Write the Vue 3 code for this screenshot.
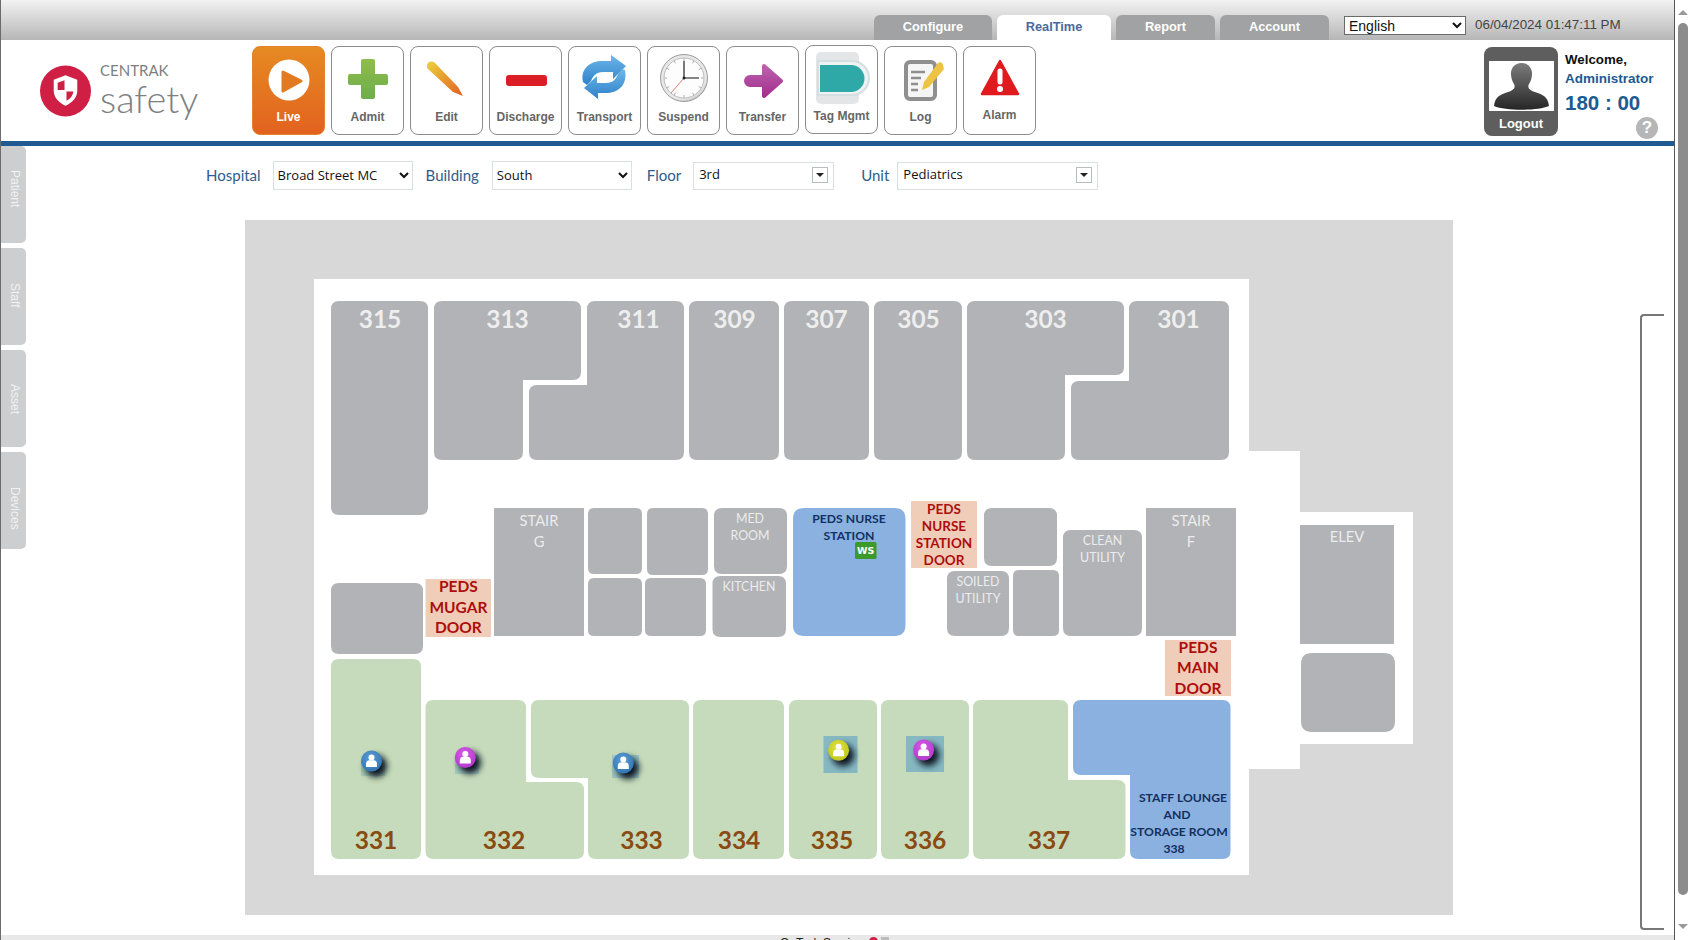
<template>
  <div class="page">
    <div class="main">
      <!-- top tabs -->
      <div class="topbar">
        <a
          v-for="tab in tabs"
          :key="tab.label"
          class="tab"
          :class="[tab.cls, { active: tab.label === 'RealTime' }]"
        >{{ tab.label }}</a>
        <select class="lang">
          <option>English</option>
        </select>
        <span class="clock-text">06/04/2024 01:47:11 PM</span>
      </div>

      <!-- toolbar -->
      <div class="toolbar">
        <div class="logo">
          <svg width="51" height="52" viewBox="0 0 52 52">
            <circle cx="26" cy="26" r="26" fill="#cf1f45" />
            <path d="M26 10 L38 14.5 V26 C38 33 32 38.5 26 41 C20 38.5 14 33 14 26 V14.5 Z" fill="#fff" />
            <path d="M25 15 V25 H18 V17.5 Z" fill="#cf1f45" />
            <path d="M27 26.5 H34 C33.6 31 30.5 34 27 36 Z" fill="#cf1f45" />
          </svg>
          <div class="logo-text">
            <span class="brand">CENTRAK</span>
            <span class="product">safety</span>
          </div>
        </div>

        <div class="tools">
          <button
            v-for="b in buttons"
            :key="b.icon"
            class="tool"
            :class="[b.icon, { live: b.icon === 'live' }]"
          >
            <svg class="tool-icon" width="71" height="60" viewBox="1 0 71 60">
              <template v-if="b.icon === 'live'">
                <circle cx="37" cy="34" r="20.5" fill="#fff" />
                <path d="M31 26 L49 35 L31 45 Z" fill="#e27a20" stroke="#e27a20" stroke-width="3" stroke-linejoin="round" />
              </template>
              <template v-else-if="b.icon === 'admit'">
                <defs>
                  <linearGradient id="gAdmit" x1="0" y1="0" x2="0" y2="1">
                    <stop offset="0" stop-color="#8fbc4c" />
                    <stop offset="1" stop-color="#6dae4a" />
                  </linearGradient>
                </defs>
                <path d="M32 13 H42 a2 2 0 0 1 2 2 V28 H55 a2 2 0 0 1 2 2 V37 a2 2 0 0 1 -2 2 H44 V51 a2 2 0 0 1 -2 2 H32 a2 2 0 0 1 -2 -2 V39 H19 a2 2 0 0 1 -2 -2 V30 a2 2 0 0 1 2 -2 H30 V15 a2 2 0 0 1 2 -2 Z" fill="url(#gAdmit)" />
              </template>
              <template v-else-if="b.icon === 'edit'">
                <defs>
                  <linearGradient id="gEdit" x1="0" y1="0" x2="1" y2="1">
                    <stop offset="0" stop-color="#ecd23c" />
                    <stop offset="1" stop-color="#e25f22" />
                  </linearGradient>
                </defs>
                <path d="M18 23 a4.5 4.5 0 0 1 7 -6 L48 41 L53 50 L43 46 Z" fill="url(#gEdit)" />
              </template>
              <template v-else-if="b.icon === 'discharge'">
                <rect x="17" y="29" width="41" height="11" rx="3" fill="#d91e26" />
              </template>
              <template v-else-if="b.icon === 'transport'">
                <defs>
                  <linearGradient id="gTrans" x1="0" y1="0" x2="0" y2="1">
                    <stop offset="0" stop-color="#6cb6ea" />
                    <stop offset="1" stop-color="#2f82c8" />
                  </linearGradient>
                </defs>
                <path d="M15 36 C12 22 23 15 34 15 H43 V9 L58 20 L45 33 V26 H35 C28 26 25 30 23 35 L19 39 Z" fill="url(#gTrans)" />
                <path d="M57 24 C60 40 49 47 38 47 H30 V53 L16 42 L29 30 V37 H38 C45 37 48 33 50 28 L54 23 Z" fill="url(#gTrans)" />
              </template>
              <template v-else-if="b.icon === 'suspend'">
                <defs>
                  <radialGradient id="gRing" cx="0.4" cy="0.35" r="0.8">
                    <stop offset="0.75" stop-color="#e8e8e8" />
                    <stop offset="1" stop-color="#8c8c8c" />
                  </radialGradient>
                </defs>
                <circle cx="37" cy="32" r="23.5" fill="url(#gRing)" stroke="#9a9a9a" />
                <circle cx="37" cy="32" r="20" fill="#fdfdfd" stroke="#bbb" />
                <line
                  v-for="t in clockTicks"
                  :key="t.k"
                  :x1="t.x1"
                  :y1="t.y1"
                  :x2="t.x2"
                  :y2="t.y2"
                  stroke="#aaa"
                  stroke-width="1"
                />
                <line x1="37" y1="32" x2="37" y2="15" stroke="#333" stroke-width="1.3" />
                <line x1="37" y1="32" x2="52" y2="32" stroke="#444" stroke-width="1.3" />
                <line x1="37" y1="32" x2="24" y2="47" stroke="#d25a5a" stroke-width=".8" />
                <circle cx="37" cy="32" r="1.5" fill="#222" />
              </template>
              <template v-else-if="b.icon === 'transfer'">
                <defs>
                  <linearGradient id="gTransfer" x1="0" y1="0" x2="0" y2="1">
                    <stop offset="0" stop-color="#bb62ac" />
                    <stop offset="1" stop-color="#a32f8f" />
                  </linearGradient>
                </defs>
                <path
                  d="M24 31 H38 V20 L55 35 L38 50 V39 H24 A4 4 0 0 1 24 31 Z"
                  fill="url(#gTransfer)"
                  stroke="url(#gTransfer)"
                  stroke-width="4"
                  stroke-linejoin="round"
                />
              </template>
              <template v-else-if="b.icon === 'tag'">
                <rect x="11" y="7" width="43" height="52" rx="5" fill="#e4e5e6" />
                <path d="M13 16 H47 A17 17 0 0 1 47 50 H13 Z" fill="#eef2f3" stroke="#d5dfe1" stroke-width="2" />
                <path d="M15 20 H46 A13.5 13.5 0 0 1 46 47 H15 Z" fill="#2fa9a8" />
              </template>
              <template v-else-if="b.icon === 'log'">
                <rect x="22" y="16" width="29" height="37" rx="4" fill="#f5f5f5" stroke="#8f8f8f" stroke-width="4" />
                <path d="M27 26 H41 M27 32 H37 M27 38 H34 M27 44 H34" stroke="#8f8f8f" stroke-width="2.4" />
                <path d="M59 19 a3 3 0 0 0 -5 -2 L40 36 L38 44 L45 41 L60 23 Z" fill="#eec242" />
              </template>
              <template v-else-if="b.icon === 'alarm'">
                <path d="M37 15 L55 48 H19 Z" fill="#e01b20" stroke="#e01b20" stroke-width="2.5" stroke-linejoin="round" />
                <path d="M37 25 V36" stroke="#fff" stroke-width="5" stroke-linecap="round" />
                <circle cx="37" cy="43" r="3" fill="#fff" />
              </template>
            </svg>
            <span class="tool-label">{{ b.label }}</span>
          </button>
        </div>

        <div class="user-card">
          <div class="avatar">
            <svg width="65" height="50" viewBox="0 0 65 50">
              <defs>
                <linearGradient id="gBust" x1="0" y1="0" x2="0" y2="1">
                  <stop offset="0" stop-color="#7c7c7c" />
                  <stop offset="1" stop-color="#262626" />
                </linearGradient>
              </defs>
              <path d="M32.5 2 C40 2 43.5 8 43 14 C42.6 19 40.5 22 39.5 24 C39 27 40 29 46 31 C54 33.5 59 36 60 45 C48 50 17 50 5 45 C6 36 11 33.5 19 31 C25 29 26 27 25.5 24 C24.5 22 22.4 19 22 14 C21.5 8 25 2 32.5 2 Z" fill="url(#gBust)" />
            </svg>
          </div>
          <span class="logout">Logout</span>
        </div>

        <div class="user-info">
          <span class="welcome">Welcome,</span>
          <span class="role">Administrator</span>
          <span class="timer">180 : 00</span>
          <span class="help">?</span>
        </div>
      </div>

      <div class="body">
        <!-- side drawers -->
        <div class="side">
          <div v-for="s in sideTabs" :key="s" class="side-tab"><span>{{ s }}</span></div>
        </div>

        <div class="center">
          <div class="filters">
            <label class="f-label hospital-label">Hospital</label>
            <select class="f-select hospital"><option>Broad Street MC</option></select>
            <label class="f-label">Building</label>
            <select class="f-select building"><option>South</option></select>
            <label class="f-label floor-label">Floor</label>
            <div class="combo floor"><span>3rd</span><i class="combo-btn"></i></div>
            <label class="f-label unit-label">Unit</label>
            <div class="combo unit"><span>Pediatrics</span><i class="combo-btn"></i></div>
          </div>

          <svg class="plan" width="1208" height="695" viewBox="245 220 1208 695">
            <defs>
              <filter id="pinBlur" x="-80%" y="-80%" width="260%" height="260%">
                <feGaussianBlur stdDeviation="3" />
              </filter>
              <radialGradient id="pinblue" cx=".45" cy=".35" r=".7">
                <stop offset="0" stop-color="#5c9fd6" />
                <stop offset="1" stop-color="#2f72ae" />
              </radialGradient>
              <radialGradient id="pinpurple" cx=".45" cy=".35" r=".7">
                <stop offset="0" stop-color="#d65ce6" />
                <stop offset="1" stop-color="#b336cc" />
              </radialGradient>
              <radialGradient id="pinyellow" cx=".45" cy=".35" r=".7">
                <stop offset="0" stop-color="#e0e23a" />
                <stop offset="1" stop-color="#bcc41c" />
              </radialGradient>
            </defs>

            <path :d="floorPath" fill="#fff" />
            <path
              v-for="(r, i) in roomPaths"
              :key="i"
              :d="r.d"
              :fill="r.fill"
            />

            <text
              v-for="(t, i) in labels"
              :key="'t' + i"
              :x="t.x"
              :y="t.y"
              :class="t.cls"
              text-anchor="middle"
              dominant-baseline="central"
            >{{ t.s }}</text>

            <rect x="855" y="542" width="21.5" height="17" rx="1.5" fill="#3c9a2c" />
            <text x="865.7" y="550.5" class="ws" text-anchor="middle" dominant-baseline="central">WS</text>

            <g v-for="(p, i) in pins" :key="'p' + i">
              <rect :x="p.bx" :y="p.by" :width="p.bw" :height="p.bh" :fill="p.bg" />
              <circle :cx="p.x + 4.5" :cy="p.y + 5" r="11" fill="#081420" filter="url(#pinBlur)" />
              <circle :cx="p.x" :cy="p.y" r="10.5" :fill="`url(#pin${p.color})`" />
              <circle :cx="p.x" :cy="p.y - 3.6" r="3" fill="#fff" />
              <path
                :d="`M${p.x - 5.5} ${p.y + 6} v-3 q0 -3.5 3.5 -3.8 h4 q3.5 .3 3.5 3.8 v3 z`"
                fill="#fff"
              />
            </g>
          </svg>
        </div>

        <div class="bracket"></div>
      </div>

      <div class="strip">
        <span>OnTrak Service</span>
        <i class="dot"></i>
        <i class="box"></i>
      </div>
    </div>

    <!-- page scrollbar -->
    <div class="scrollbar">
      <i class="arrow up"></i>
      <div class="thumb"></div>
      <i class="arrow down"></i>
    </div>
  </div>
</template>

<script setup>
const tabs = [
  { label: 'Configure', cls: 'w-configure' },
  { label: 'RealTime', cls: 'w-realtime' },
  { label: 'Report', cls: 'w-report' },
  { label: 'Account', cls: 'w-account' }
]

const buttons = [
  { icon: 'live', label: 'Live' },
  { icon: 'admit', label: 'Admit' },
  { icon: 'edit', label: 'Edit' },
  { icon: 'discharge', label: 'Discharge' },
  { icon: 'transport', label: 'Transport' },
  { icon: 'suspend', label: 'Suspend' },
  { icon: 'transfer', label: 'Transfer' },
  { icon: 'tag', label: 'Tag Mgmt' },
  { icon: 'log', label: 'Log' },
  { icon: 'alarm', label: 'Alarm' }
]

const sideTabs = ['Patient', 'Staff', 'Asset', 'Devices']

const clockTicks = Array.from({ length: 12 }, (_, k) => {
  const a = (k * Math.PI) / 6
  return {
    k,
    x1: 37 + 17 * Math.sin(a),
    y1: 32 - 17 * Math.cos(a),
    x2: 37 + 19.5 * Math.sin(a),
    y2: 32 - 19.5 * Math.cos(a)
  }
})

// polygon (clockwise) to path, only the outer corners get rounded
const roomPath = (pts, r = 8) => {
  const n = pts.length
  let d = ''
  pts.forEach((p, i) => {
    const a = pts[(i + n - 1) % n]
    const b = pts[(i + 1) % n]
    const ax = p[0] - a[0], ay = p[1] - a[1]
    const bx = b[0] - p[0], by = b[1] - p[1]
    const la = Math.hypot(ax, ay), lb = Math.hypot(bx, by)
    const convex = ax * by - ay * bx > 0
    const c = convex ? Math.min(r, la / 2, lb / 2) : 0
    const x1 = p[0] - (ax / la) * c, y1 = p[1] - (ay / la) * c
    const x2 = p[0] + (bx / lb) * c, y2 = p[1] + (by / lb) * c
    d += `${i ? 'L' : 'M'}${x1} ${y1} Q${p[0]} ${p[1]} ${x2} ${y2} `
  })
  return d + 'Z'
}

const box = (x1, y1, x2, y2) => [[x1, y1], [x2, y1], [x2, y2], [x1, y2]]

const GRAY = '#b1b3b6'
const GREEN = '#c5dbbb'
const BLUE = '#8ab1e0'
const DOOR = '#f0cdb8'

const floorPath = roomPath(
  [[314, 279], [1249, 279], [1249, 451], [1300, 451], [1300, 512], [1413, 512], [1413, 744], [1300, 744], [1300, 769], [1249, 769], [1249, 875], [314, 875]],
  0
)

const rooms = [
  // top row
  { pts: box(331, 301, 428, 515), fill: GRAY },
  { pts: [[434, 301], [581, 301], [581, 380], [523, 380], [523, 460], [434, 460]], fill: GRAY },
  { pts: [[587, 301], [684, 301], [684, 460], [529, 460], [529, 385], [587, 385]], fill: GRAY },
  { pts: box(689, 301, 779, 460), fill: GRAY },
  { pts: box(784, 301, 869, 460), fill: GRAY },
  { pts: box(874, 301, 962, 460), fill: GRAY },
  { pts: [[967, 301], [1124, 301], [1124, 375], [1065, 375], [1065, 460], [967, 460]], fill: GRAY },
  { pts: [[1129, 301], [1229, 301], [1229, 460], [1071, 460], [1071, 381], [1129, 381]], fill: GRAY },
  // middle
  { pts: box(331, 583, 423, 654), fill: GRAY },
  { pts: box(425.5, 579, 491, 637), fill: DOOR, r: 0 },
  { pts: box(494, 508, 584, 636), fill: GRAY, r: 0 },
  { pts: box(588, 508, 642, 574), fill: GRAY, r: 6 },
  { pts: box(647, 508, 708, 575), fill: GRAY, r: 6 },
  { pts: box(588, 578, 642, 636), fill: GRAY, r: 6 },
  { pts: box(645, 578, 706, 636), fill: GRAY, r: 6 },
  { pts: box(714, 508, 787, 574), fill: GRAY },
  { pts: box(712.5, 576, 786, 637), fill: GRAY },
  { pts: box(793, 508, 905.5, 636), fill: BLUE, r: 11 },
  { pts: box(911, 501, 977, 568), fill: DOOR, r: 0 },
  { pts: box(984, 508, 1057, 566), fill: GRAY },
  { pts: box(947, 571, 1009, 636), fill: GRAY },
  { pts: box(1013, 570, 1059, 636), fill: GRAY, r: 6 },
  { pts: box(1063, 530, 1142, 636), fill: GRAY },
  { pts: box(1146, 508, 1236, 636), fill: GRAY, r: 0 },
  { pts: box(1165, 640, 1231, 696), fill: DOOR, r: 0 },
  { pts: box(1300, 525, 1394, 644), fill: GRAY, r: 0 },
  { pts: box(1301, 653, 1395, 732), fill: GRAY, r: 11 },
  // bottom row
  { pts: box(331, 659, 421, 859), fill: GREEN },
  { pts: [[425.5, 700], [526, 700], [526, 782], [584, 782], [584, 859], [425.5, 859]], fill: GREEN },
  { pts: [[531, 700], [689, 700], [689, 859], [588, 859], [588, 778], [531, 778]], fill: GREEN },
  { pts: box(693, 700, 784, 859), fill: GREEN },
  { pts: box(789, 700, 877, 859), fill: GREEN },
  { pts: box(881, 700, 969, 859), fill: GREEN },
  { pts: [[973, 700], [1068, 700], [1068, 780], [1125.5, 780], [1125.5, 859], [973, 859]], fill: GREEN },
  { pts: [[1073, 700], [1230.5, 700], [1230.5, 859], [1130, 859], [1130, 775], [1073, 775]], fill: BLUE }
]

const roomPaths = rooms.map((r) => ({ d: roomPath(r.pts, r.r ?? 8), fill: r.fill }))

const labels = [
  ...[[380, '315'], [507.5, '313'], [638.5, '311'], [734.5, '309'], [826.5, '307'], [918.5, '305'], [1045.5, '303'], [1178.5, '301']]
    .map(([x, s]) => ({ x, y: 318.5, s, cls: 'num-top' })),
  ...[[376, '331'], [504, '332'], [641.5, '333'], [739, '334'], [832, '335'], [925, '336'], [1049, '337']]
    .map(([x, s]) => ({ x, y: 839, s, cls: 'num-bed' })),
  { x: 539, y: 519.5, s: 'STAIR', cls: 'room-lg' },
  { x: 539, y: 540.5, s: 'G', cls: 'room-lg' },
  { x: 750, y: 518, s: 'MED', cls: 'room' },
  { x: 750, y: 535, s: 'ROOM', cls: 'room' },
  { x: 749, y: 586, s: 'KITCHEN', cls: 'room' },
  { x: 978, y: 581, s: 'SOILED', cls: 'room' },
  { x: 978, y: 598, s: 'UTILITY', cls: 'room' },
  { x: 1102.5, y: 540.7, s: 'CLEAN', cls: 'room' },
  { x: 1102.5, y: 557.7, s: 'UTILITY', cls: 'room' },
  { x: 1191, y: 519.5, s: 'STAIR', cls: 'room-lg' },
  { x: 1191, y: 540.5, s: 'F', cls: 'room-lg' },
  { x: 1347, y: 536, s: 'ELEV', cls: 'room-lg' },
  { x: 849, y: 518.7, s: 'PEDS NURSE', cls: 'staff' },
  { x: 849, y: 535, s: 'STATION', cls: 'staff' },
  { x: 1183, y: 797.2, s: 'STAFF LOUNGE', cls: 'staff' },
  { x: 1177, y: 814.2, s: 'AND', cls: 'staff' },
  { x: 1179, y: 831.2, s: 'STORAGE ROOM', cls: 'staff' },
  { x: 1174, y: 848.2, s: '338', cls: 'staff' },
  { x: 458.4, y: 586, s: 'PEDS', cls: 'door-lg' },
  { x: 458.4, y: 606.7, s: 'MUGAR', cls: 'door-lg' },
  { x: 458.4, y: 627.3, s: 'DOOR', cls: 'door-lg' },
  { x: 944, y: 509, s: 'PEDS', cls: 'door' },
  { x: 944, y: 525.7, s: 'NURSE', cls: 'door' },
  { x: 944, y: 542.7, s: 'STATION', cls: 'door' },
  { x: 944, y: 559.7, s: 'DOOR', cls: 'door' },
  { x: 1198, y: 647, s: 'PEDS', cls: 'door-lg' },
  { x: 1198, y: 667, s: 'MAIN', cls: 'door-lg' },
  { x: 1198, y: 687.5, s: 'DOOR', cls: 'door-lg' }
]

const pins = [
  { x: 371.5, y: 761, color: 'blue', bx: 361, by: 760, bw: 24, bh: 16, bg: '#a5ccb6' },
  { x: 465.3, y: 757.5, color: 'purple', bx: 455, by: 755, bw: 24, bh: 19, bg: '#a5cbc0' },
  { x: 623.3, y: 763, color: 'blue', bx: 612, by: 755, bw: 27, bh: 23, bg: '#9cc6c6' },
  { x: 838.6, y: 750.3, color: 'yellow', bx: 823.5, by: 736, bw: 34, bh: 37, bg: '#86b8c2' },
  { x: 923.6, y: 750, color: 'purple', bx: 906, by: 736, bw: 38, bh: 36, bg: '#86b8c2' }
]
</script>

<style scoped>
.page {
  display: flex;
  width: 1690px;
  height: 940px;
  overflow: hidden;
  background: #fff;
  font-family: "Liberation Sans", Arial, sans-serif;
}

.main {
  width: 1674px;
  height: 940px;
  box-sizing: border-box;
  border-left: 1px solid #6b6b6b;
  display: flex;
  flex-direction: column;
}

.topbar {
  height: 40px;
  flex: none;
  display: flex;
  align-items: flex-start;
  padding: 15px 0 0 873px;
  box-sizing: border-box;
  background: linear-gradient(#f2f2f2, #b6b6b6);
}

.tab {
  height: 25px;
  margin-right: 5px;
  border-radius: 6px 6px 0 0;
  background: #a0a2a4;
  color: #fff;
  font-size: 12.8px;
  font-weight: bold;
  line-height: 23px;
  text-align: center;
}

.tab.active {
  background: #fff;
  color: #4b6a9b;
}

.w-configure { width: 118px; }
.w-realtime { width: 114px; }
.w-report { width: 99px; }
.w-account { width: 109px; }

.lang {
  width: 122px;
  height: 19px;
  margin: 1px 0 0 10px;
  padding: 0;
  border: 1px solid #6a6a6a;
  border-radius: 0;
  background: #fff;
  color: #111;
  font-family: "Liberation Sans", Arial, sans-serif;
  font-size: 14px;
}

.clock-text {
  margin: 0 0 0 9px;
  color: #444;
  font-size: 13.4px;
  line-height: 19px;
  white-space: nowrap;
}

.toolbar {
  height: 106px;
  flex: none;
  box-sizing: border-box;
  display: flex;
  align-items: flex-start;
  padding-top: 6px;
  border-bottom: 5px solid #1f5a92;
}

.logo {
  width: 251px;
  height: 89px;
  box-sizing: border-box;
  padding-left: 39px;
  display: flex;
  align-items: center;
  flex: none;
}

.logo-text {
  display: flex;
  flex-direction: column;
  margin: -3px 0 0 9px;
  font-family: Lato, sans-serif;
  color: #7d7f82;
}

.brand {
  font-size: 15px;
  line-height: 18px;
}

.product {
  font-size: 38px;
  line-height: 38px;
  font-weight: 300;
}

.tools {
  display: flex;
  gap: 6px;
  flex: none;
}

.tool {
  width: 73px;
  height: 89px;
  box-sizing: border-box;
  padding: 0;
  border: 1px solid #8c8c8c;
  border-radius: 8px;
  background: #fff;
  display: flex;
  flex-direction: column;
  align-items: center;
  font-family: inherit;
}

.tool-icon {
  display: block;
  flex: none;
  margin-top: -1px;
}

.tool-label {
  margin-top: 4px;
  color: #666;
  font-size: 12px;
  font-weight: bold;
  line-height: 14px;
}

.tool.live {
  border-color: #e5812a;
  background: linear-gradient(#e68a22, #e2621f);
}

.tool.live .tool-label {
  color: #fff;
}

.tool.tag {
  margin-top: -1px;
}

.tool.alarm .tool-label {
  margin-top: 2px;
}

.user-card {
  width: 74px;
  height: 89px;
  margin: 1px 0 0 448px;
  flex: none;
  border-radius: 8px;
  background: #5e5e5e;
  display: flex;
  flex-direction: column;
  align-items: center;
  padding-top: 14px;
  box-sizing: border-box;
}

.avatar {
  width: 65px;
  height: 50px;
  background: #fff;
  flex: none;
}

.avatar svg {
  display: block;
}

.logout {
  margin-top: 5px;
  color: #fff;
  font-size: 13px;
  font-weight: bold;
  line-height: 16px;
}

.user-info {
  margin-left: 7px;
  padding-top: 6px;
  display: flex;
  flex-direction: column;
  align-items: flex-start;
  position: relative;
}

.welcome {
  color: #111;
  font-size: 13.3px;
  font-weight: bold;
  line-height: 16px;
}

.role {
  margin-top: 2px;
  color: #205a92;
  font-size: 13.5px;
  font-weight: bold;
  line-height: 17px;
}

.timer {
  margin-top: 3px;
  color: #205a92;
  font-size: 20.5px;
  font-weight: bold;
  line-height: 26px;
  white-space: nowrap;
}

.help {
  position: absolute;
  left: 71px;
  top: 71px;
  width: 22px;
  height: 22px;
  border-radius: 50%;
  background: #b6b6b6;
  color: #fff;
  font-size: 17px;
  font-weight: bold;
  line-height: 22px;
  text-align: center;
}

.body {
  height: 789px;
  flex: none;
  display: flex;
}

.side {
  width: 25px;
  flex: none;
  display: flex;
  flex-direction: column;
  gap: 5px;
}

.side-tab {
  width: 25px;
  height: 97px;
  box-sizing: border-box;
  padding-left: 1px;
  border-radius: 0 5px 5px 0;
  background: #ccced0;
  display: flex;
  justify-content: center;
}

.side-tab span {
  writing-mode: vertical-rl;
  color: #f2f2f2;
  font-size: 12px;
  line-height: 15px;
  height: max-content;
}

.side-tab:nth-child(1) span { margin-top: 24px; }
.side-tab:nth-child(2) span { margin-top: 35px; }
.side-tab:nth-child(3) span { margin-top: 34px; }
.side-tab:nth-child(4) span { margin-top: 35px; }

.center {
  width: 1614px;
  flex: none;
}

.filters {
  display: flex;
  align-items: center;
  height: 29px;
  margin-top: 15px;
  padding-left: 180px;
}

.f-label {
  margin: -2px 13px 0 0;
  color: #2e5c8c;
  font-family: Lato, sans-serif;
  font-size: 15px;
  white-space: nowrap;
}

.hospital-label {
  margin-right: 12px;
}

.floor-label {
  margin-right: 12px;
}

.f-select {
  height: 29px;
  margin-right: 13px;
  padding: 0 0 2px;
  border: 1px solid #dcdfe2;
  border-radius: 0;
  background: #fff;
  color: #111;
  font-family: "Open Sans", sans-serif;
  font-size: 13px;
}

.hospital { width: 140px; }
.building { width: 140px; margin-right: 15px; }

.combo {
  height: 28px;
  box-sizing: border-box;
  border: 1px solid #dcdfe2;
  display: flex;
  align-items: center;
  justify-content: space-between;
  padding: 0 5px 3px 5px;
  color: #111;
  font-family: "Open Sans", sans-serif;
  font-size: 13px;
}

.floor {
  width: 141px;
  margin-right: 27px;
}

.unit-label {
  margin-right: 8px;
}

.unit {
  width: 201px;
}

.combo-btn {
  width: 16px;
  height: 16px;
  margin-top: 2px;
  box-sizing: border-box;
  border: 1px solid #b8bcc0;
  background: #fff;
  position: relative;
}

.combo-btn::after {
  content: "";
  position: absolute;
  left: 3px;
  top: 5px;
  border-left: 4px solid transparent;
  border-right: 4px solid transparent;
  border-top: 4px solid #222;
}

.plan {
  display: block;
  margin: 30px 0 0 219px;
  background: #d8d8d8;
}

.plan text {
  font-family: Lato, sans-serif;
}

.plan .num-top {
  fill: #eeeeee;
  font-size: 24.5px;
  font-weight: bold;
}

.plan .num-bed {
  fill: #8a4a12;
  font-size: 24.5px;
  font-weight: bold;
}

.plan .room {
  fill: #ececec;
  font-size: 12.4px;
}

.plan .room-lg {
  fill: #ececec;
  font-size: 14.7px;
}

.plan .staff {
  fill: #12305f;
  font-size: 12.2px;
  font-weight: bold;
}

.plan .door {
  fill: #ad0d0d;
  font-size: 13.5px;
  font-weight: bold;
}

.plan .door-lg {
  fill: #ad0d0d;
  font-size: 15.5px;
  font-weight: bold;
}

.plan .ws {
  fill: #fff;
  font-family: "DejaVu Sans", sans-serif;
  font-size: 9.5px;
  font-weight: bold;
}

.bracket {
  width: 24px;
  height: 616px;
  margin-top: 168px;
  flex: none;
  box-sizing: border-box;
  border: 2px solid #777;
  border-right: 0;
  border-radius: 4px 0 0 4px;
}

.strip {
  height: 5px;
  flex: none;
  overflow: hidden;
  background: #e8e8e8;
  padding: 2px 0 0 779px;
  box-sizing: border-box;
  display: flex;
  align-items: flex-start;
  color: #222;
  font-size: 12px;
  line-height: 13px;
  white-space: nowrap;
}

.strip .dot {
  width: 9px;
  height: 9px;
  margin: 0 0 0 6px;
  border-radius: 50%;
  background: #cf1f45;
}

.strip .box {
  width: 8px;
  height: 9px;
  margin-left: 3px;
  background: #bbb;
}

.scrollbar {
  width: 16px;
  height: 940px;
  flex: none;
  box-sizing: border-box;
  border-left: 1px solid #555;
  position: relative;
}

.thumb {
  position: absolute;
  left: 3px;
  top: 23px;
  width: 10px;
  height: 872px;
  border-radius: 5px;
  background: #8c8c8c;
}

.arrow {
  position: absolute;
  left: 3px;
  border-left: 5px solid transparent;
  border-right: 5px solid transparent;
}

.arrow.up {
  top: 10px;
  border-bottom: 5px solid #999;
}

.arrow.down {
  top: 924px;
  border-top: 5px solid #999;
}
</style>

<style>
html,
body {
  margin: 0;
  overflow: hidden;
  background: #fff;
}
</style>
